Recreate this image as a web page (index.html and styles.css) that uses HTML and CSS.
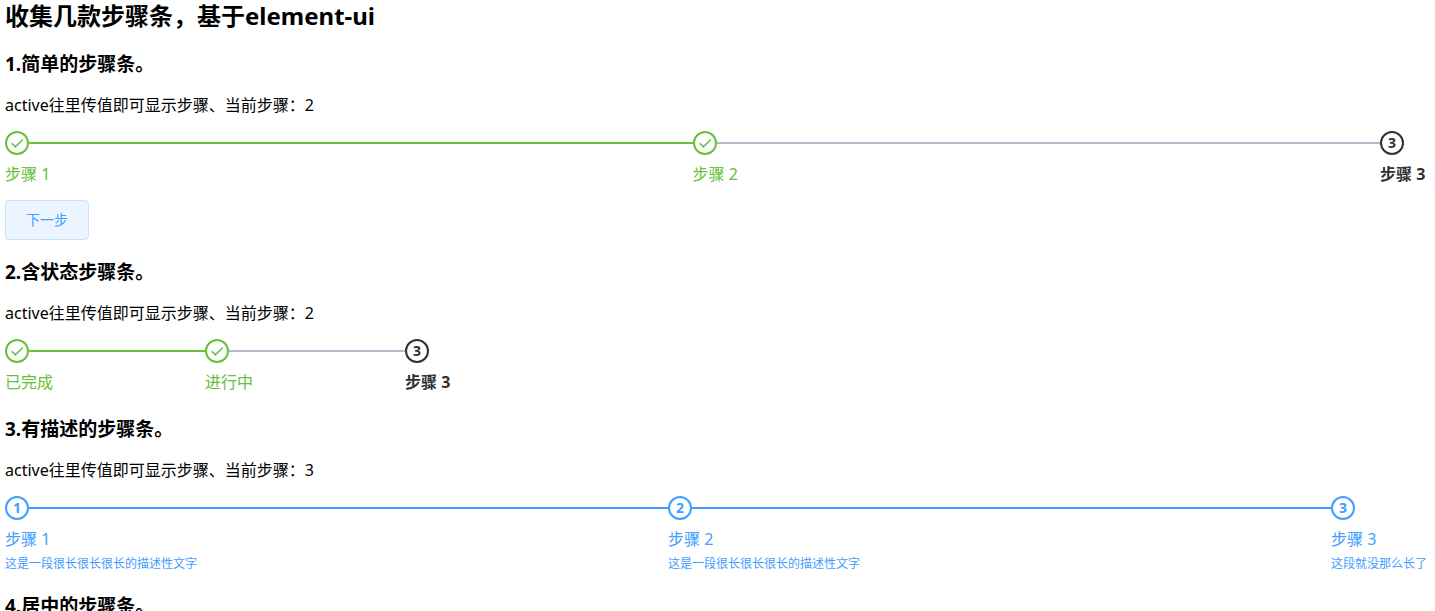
FILE: index.html
```html
<!DOCTYPE html>
<html lang="zh-CN">
<head>
  <meta charset="UTF-8" />
  <meta name="viewport" content="width=device-width, initial-scale=1.0"/>
  <title>步骤条</title>
  <link rel="stylesheet" href="styles.css">
</head>
<body>
  <svg class="sprite" aria-hidden="true">
    <symbol id="check" viewBox="0 0 20 20">
      <path d="M4.6 10.2 L8.3 13.9 L16 6.5" fill="none" stroke="currentColor" stroke-width="1.5"/>
    </symbol>
  </svg>

  <h2>收集几款步骤条，基于element-ui</h2>

  <!-- 简单 -->
  <section>
    <h3>1.简单的步骤条。</h3>
    <p>active往里传值即可显示步骤、当前步骤：2</p>
    <ol class="steps">
      <li class="step success">
        <div class="step-head"><span class="step-icon"><svg><use href="#check"/></svg></span></div>
        <div class="step-title">步骤 1</div>
      </li>
      <li class="step success next-wait">
        <div class="step-head"><span class="step-icon"><svg><use href="#check"/></svg></span></div>
        <div class="step-title">步骤 2</div>
      </li>
      <li class="step process">
        <div class="step-head"><span class="step-icon">3</span></div>
        <div class="step-title">步骤 3</div>
      </li>
    </ol>
    <button type="button" class="btn">下一步</button>
  </section>

  <!-- 含状态 -->
  <section>
    <h3>2.含状态步骤条。</h3>
    <p>active往里传值即可显示步骤、当前步骤：2</p>
    <ol class="steps steps-fixed">
      <li class="step success">
        <div class="step-head"><span class="step-icon"><svg><use href="#check"/></svg></span></div>
        <div class="step-title">已完成</div>
      </li>
      <li class="step success next-wait">
        <div class="step-head"><span class="step-icon"><svg><use href="#check"/></svg></span></div>
        <div class="step-title">进行中</div>
      </li>
      <li class="step process">
        <div class="step-head"><span class="step-icon">3</span></div>
        <div class="step-title">步骤 3</div>
      </li>
    </ol>
  </section>

  <!-- 有描述 -->
  <section>
    <h3>3.有描述的步骤条。</h3>
    <p>active往里传值即可显示步骤、当前步骤：3</p>
    <ol class="steps">
      <li class="step finish">
        <div class="step-head"><span class="step-icon">1</span></div>
        <div class="step-title">步骤 1</div>
        <div class="step-desc">这是一段很长很长很长的描述性文字</div>
      </li>
      <li class="step finish">
        <div class="step-head"><span class="step-icon">2</span></div>
        <div class="step-title">步骤 2</div>
        <div class="step-desc">这是一段很长很长很长的描述性文字</div>
      </li>
      <li class="step finish">
        <div class="step-head"><span class="step-icon">3</span></div>
        <div class="step-title">步骤 3</div>
        <div class="step-desc">这段就没那么长了</div>
      </li>
    </ol>
  </section>

  <!-- 居中 -->
  <section>
    <h3>4.居中的步骤条。</h3>
  </section>
</body>
</html>
```
FILE: styles.css
```css
:root {
  --success: #67c23a;
  --primary: #409eff;
  --process: #303133;
  --wait: #b4bccc;
}

* {
  box-sizing: border-box;
  margin: 0;
  padding: 0;
}

html {
  overflow: hidden;
}

body {
  margin: 0 8px 0 5px;
  font-family: "Microsoft YaHei", "Noto Sans", "Noto Sans CJK SC", sans-serif;
  font-size: 16px;
  color: #000;
  background-color: #fff;
}

.sprite {
  display: none;
}

h2 {
  font-size: 24px;
  line-height: 32px;
}

h3 {
  margin: 19px 0 18px;
  font-size: 19px;
  line-height: 26px;
}

p {
  margin-bottom: 16px;
  line-height: 20px;
}

.steps {
  display: flex;
  list-style: none;
}

.step {
  flex: 1;
  white-space: nowrap;
}

.step:last-child {
  flex: none;
  min-width: 47px;
}

.steps-fixed .step {
  flex: 0 0 200px;
}

.step-head {
  display: flex;
  align-items: center;
}

.step-head::after {
  content: "";
  flex: 1;
  height: 2px;
  background-color: currentColor;
}

.next-wait .step-head::after {
  background-color: var(--wait);
}

.step:last-child .step-head::after {
  display: none;
}

.step-icon {
  display: flex;
  justify-content: center;
  align-items: center;
  width: 24px;
  height: 24px;
  border: 2px solid currentColor;
  border-radius: 50%;
  font-size: 14px;
  font-weight: bold;
  line-height: 20px;
}

.step-icon svg {
  width: 20px;
  height: 20px;
}

.step-title {
  padding-top: 4px;
  line-height: 30px;
}

.step-desc {
  font-size: 12px;
  line-height: 20px;
}

.success {
  color: var(--success);
}

.finish {
  color: var(--primary);
}

.process {
  color: var(--process);
}

.process .step-title {
  font-weight: bold;
}

.btn {
  display: block;
  margin-top: 11px;
  padding: 0 20px 2px;
  height: 40px;
  border: 1px solid #c6e2ff;
  border-radius: 4px;
  background-color: #ecf5ff;
  color: var(--primary);
  font-family: inherit;
  font-size: 14px;
  cursor: pointer;
}
```
